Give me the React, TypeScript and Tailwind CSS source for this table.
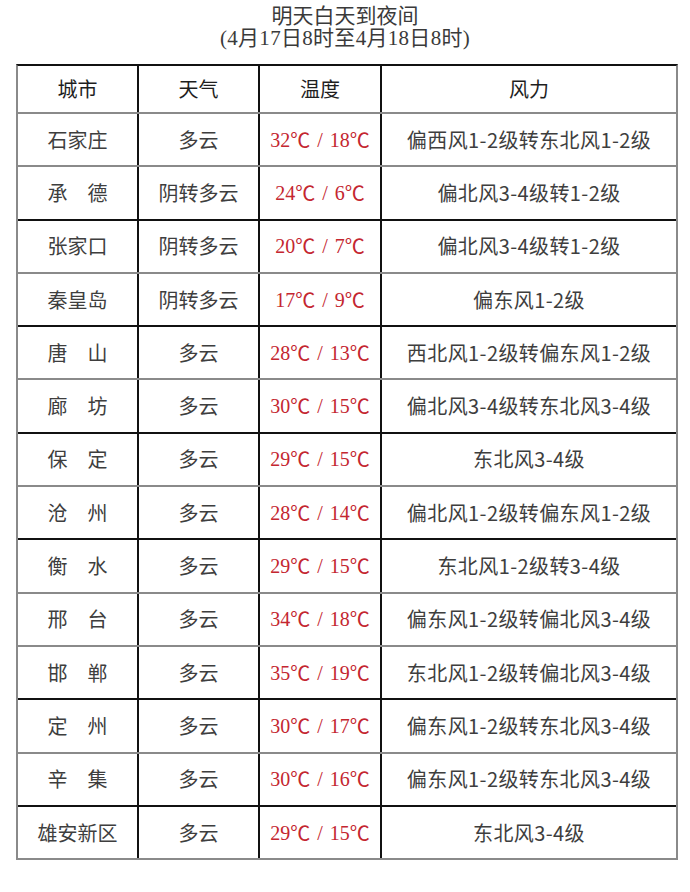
import React from "react";

type Row = { city: string; weather: string; hi: string; lo: string; wind: string; line: "g" | "b" };

const rows: Row[] = [
  { city: "石家庄", weather: "多云", hi: "32", lo: "18", wind: "偏西风1-2级转东北风1-2级", line: "g" },
  { city: "承　德", weather: "阴转多云", hi: "24", lo: "6", wind: "偏北风3-4级转1-2级", line: "b" },
  { city: "张家口", weather: "阴转多云", hi: "20", lo: "7", wind: "偏北风3-4级转1-2级", line: "g" },
  { city: "秦皇岛", weather: "阴转多云", hi: "17", lo: "9", wind: "偏东风1-2级", line: "b" },
  { city: "唐　山", weather: "多云", hi: "28", lo: "13", wind: "西北风1-2级转偏东风1-2级", line: "g" },
  { city: "廊　坊", weather: "多云", hi: "30", lo: "15", wind: "偏北风3-4级转东北风3-4级", line: "b" },
  { city: "保　定", weather: "多云", hi: "29", lo: "15", wind: "东北风3-4级", line: "g" },
  { city: "沧　州", weather: "多云", hi: "28", lo: "14", wind: "偏北风1-2级转偏东风1-2级", line: "b" },
  { city: "衡　水", weather: "多云", hi: "29", lo: "15", wind: "东北风1-2级转3-4级", line: "g" },
  { city: "邢　台", weather: "多云", hi: "34", lo: "18", wind: "偏东风1-2级转偏北风3-4级", line: "g" },
  { city: "邯　郸", weather: "多云", hi: "35", lo: "19", wind: "东北风1-2级转偏北风3-4级", line: "b" },
  { city: "定　州", weather: "多云", hi: "30", lo: "17", wind: "偏东风1-2级转东北风3-4级", line: "g" },
  { city: "辛　集", weather: "多云", hi: "30", lo: "16", wind: "偏东风1-2级转东北风3-4级", line: "b" },
  { city: "雄安新区", weather: "多云", hi: "29", lo: "15", wind: "东北风3-4级", line: "g" },
];

const serif = "font-['Liberation_Serif','Noto_Sans_CJK_SC',serif]";
const sans = "font-['Noto_Sans_CJK_SC',sans-serif]";

function Deg() {
  return <span className="font-['Noto_Sans_CJK_SC',sans-serif]">℃</span>;
}

export default function App() {
  return (
    <div className="w-[690px] h-[892px] bg-white">
      <div className={`${serif} pt-[5px] text-center text-[21px] leading-[22px] text-[#3a3a3a]`}>
        <div>明天白天到夜间</div>
        <div className="tracking-[0.3px]">(4月17日8时至4月18日8时)</div>
      </div>
      <div className="ml-[16px] mt-[15px] w-[662px] border-t-2 border-l-2 border-r-2 border-b-0 border-t-[#111] border-l-[#8a8a8a] border-r-[#8a8a8a]">
        <div className={`${sans} flex h-[48px] border-b-2 border-[#8a8a8a] text-[20px] text-[#1e1e1e]`}>
          <div className="flex w-[121px] items-center justify-center border-r-2 border-[#111]">城市</div>
          <div className="flex w-[121px] items-center justify-center border-r-2 border-[#111]">天气</div>
          <div className="flex w-[122px] items-center justify-center border-r-2 border-[#111]">温度</div>
          <div className="flex flex-1 items-center justify-center">风力</div>
        </div>
        {rows.map((r, i) => (
          <div
            key={i}
            className={`flex h-[53.3px] border-b-2 text-[20px] text-[#3e3e3e] ${r.line === "b" ? "border-[#111]" : "border-[#8a8a8a]"}`}
          >
            <div className={`${sans} flex w-[121px] items-center justify-center border-r-2 border-[#111]`}>{r.city}</div>
            <div className={`${sans} flex w-[121px] items-center justify-center border-r-2 border-[#111]`}>{r.weather}</div>
            <div className={`${serif} flex w-[122px] items-center justify-center border-r-2 border-[#111] text-[#c42630]`}>
              <span>{r.hi}</span>
              <Deg />
              <span className="mx-[7px]">/</span>
              <span>{r.lo}</span>
              <Deg />
            </div>
            <div className={`${sans} flex flex-1 items-center justify-center tracking-[0.4px]`}>{r.wind}</div>
          </div>
        ))}
      </div>
    </div>
  );
}
